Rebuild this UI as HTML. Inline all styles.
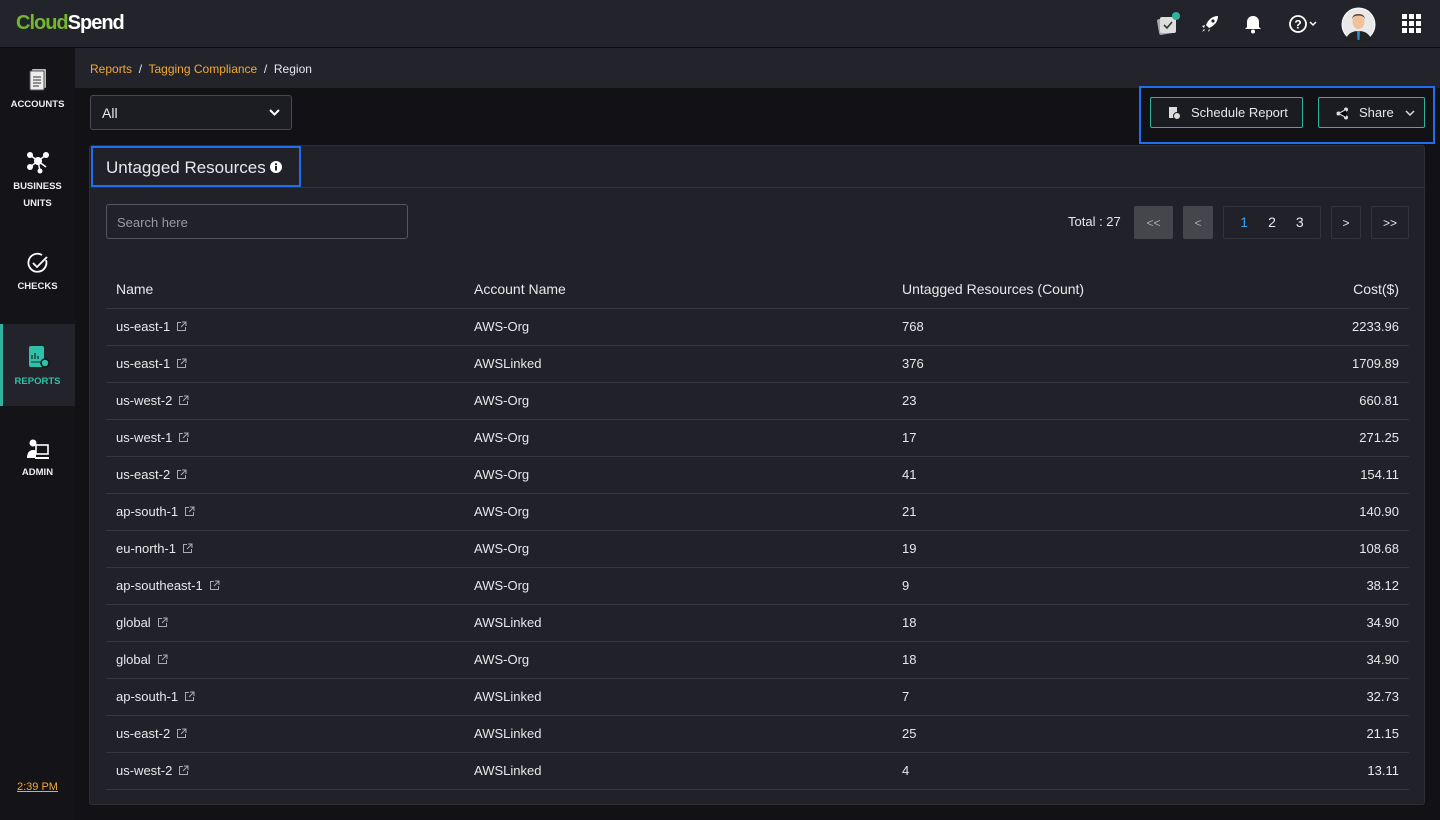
<!DOCTYPE html>
<html><head><meta charset="utf-8"><style>
*{box-sizing:border-box;margin:0;padding:0}
body{width:1440px;height:820px;background:#111116;font-family:"Liberation Sans",sans-serif;color:#e8e8ea;position:relative;overflow:hidden;font-size:13px}
.top{position:absolute;left:0;top:0;width:1440px;height:48px;background:#22232b;border-bottom:1px solid #0b0b0e}
.logo{position:absolute;left:16px;top:12px;font-size:20px;font-weight:bold;letter-spacing:-1px}
.side{position:absolute;left:0;top:48px;width:75px;height:772px;background:#131318}
.nav{position:absolute;left:0;width:75px;text-align:center;font-size:9.5px;font-weight:bold;color:#eee;line-height:17px}
.nav svg{display:block;margin:0 auto 4px}
.bc{position:absolute;left:75px;top:48px;width:1365px;height:40px;background:#22232b;font-size:12px;padding:14px 15px}
.bc a{color:#f0a93a}
.sel{position:absolute;left:90px;top:95px;width:202px;height:35px;border:1px solid #4a4b52;border-radius:3px;background:#1c1d23;padding:9px 11px;font-size:14px}
.btnbox{position:absolute;left:1139px;top:86px;width:296px;height:58px;border:2px solid #1f6ef0}
.btn{position:absolute;top:97px;height:31px;border:1px solid #2fb39d;border-radius:2px;background:#1b1c22;font-size:13px;padding:7px 0 0 0;white-space:nowrap}
.panel{position:absolute;left:89px;top:145px;width:1336px;height:660px;background:#212229;border:1px solid #2e2f36;border-radius:3px}
.ttl{position:absolute;left:91px;top:146px;width:210px;height:41px;border:2px solid #1f6ef0;font-size:17px;padding:10px 13px;white-space:nowrap}
.hdrline{position:absolute;left:89px;top:187px;width:1336px;height:1px;background:#33343b}
.search{position:absolute;left:106px;top:204px;width:302px;height:35px;border:1px solid #55565c;border-radius:3px;padding:10px 10px;color:#9a9ba0;font-size:13px}
.pg{position:absolute;top:206px;height:33px;border:1px solid #34353c;border-radius:2px;text-align:center;font-size:12px;padding-top:9px}
table{position:absolute;left:106px;top:270px;width:1303px;border-collapse:collapse}
td,th{height:37px;border-bottom:1px solid #36373e;padding:0 10px;text-align:left;font-weight:normal;font-size:13px}
th{font-size:14px;height:38px}
td:last-child,th:last-child{text-align:right}
.ext{display:inline-block;vertical-align:-1px;margin-left:6px}
</style></head><body>
<div class="top">
<div class="logo"><span style="color:#74b72e">Cloud</span><span style="color:#fff">Spend</span></div>
<svg style="position:absolute;left:1156px;top:12px" width="26" height="24"><rect x="2" y="6" width="16" height="16" rx="2" fill="#aaa" transform="rotate(-10 10 14)"/><rect x="4" y="5" width="16" height="16" rx="2" fill="#ddd"/><path d="M8 13l3 3 5-6" stroke="#333" stroke-width="1.6" fill="none"/><circle cx="20" cy="4" r="4" fill="#2fb39d"/></svg>
<svg style="position:absolute;left:1200px;top:14px" width="20" height="20"><path d="M18 2c-6 0-10 4-12 9l3 3c5-2 9-6 9-12z M5 11l-3 1 2 2z M9 15l-1 3 2-2z M4 15l-2 3 3-2z" fill="#fff"/><circle cx="13" cy="7" r="1.6" fill="#22232b"/></svg>
<svg style="position:absolute;left:1244px;top:14px" width="18" height="20"><path d="M9 2c-4 0-6 3-6 6v5l-2 2h16l-2-2V8c0-3-2-6-6-6z" fill="#fff"/><circle cx="9" cy="17.5" r="2" fill="#fff"/></svg>
<svg style="position:absolute;left:1288px;top:14px" width="32" height="20"><circle cx="10" cy="10" r="8" stroke="#fff" stroke-width="1.8" fill="none"/><text x="10" y="14.5" font-size="12" font-weight="bold" fill="#fff" text-anchor="middle" font-family="Liberation Sans">?</text><path d="M22 8l3 3 3-3" stroke="#fff" stroke-width="1.5" fill="none"/></svg>
<svg style="position:absolute;left:1341px;top:7px" width="35" height="35"><circle cx="17.5" cy="17.5" r="17" fill="#fff"/><circle cx="17.5" cy="17.5" r="16" fill="#e9e9e9"/><path d="M5 32c2-6 7-8 12.5-8s10.5 2 12.5 8a16 16 0 0 1-25 0z" fill="#222"/><path d="M16 24h3l-0.5 9h-2z" fill="#1e90d6"/><ellipse cx="17.5" cy="15" rx="6" ry="7" fill="#f0c29c"/><path d="M11 13c0-6 13-6 13 0c0-4-2-6-6.5-6S11 9 11 13z" fill="#6b3d1f"/></svg>
<svg style="position:absolute;left:1402px;top:14px" width="20" height="20" fill="#fff"><rect x="0" y="0" width="5" height="5"/><rect x="7" y="0" width="5" height="5"/><rect x="14" y="0" width="5" height="5"/><rect x="0" y="7" width="5" height="5"/><rect x="7" y="7" width="5" height="5"/><rect x="14" y="7" width="5" height="5"/><rect x="0" y="14" width="5" height="5"/><rect x="7" y="14" width="5" height="5"/><rect x="14" y="14" width="5" height="5"/></svg>
</div>
<div class="side">
<div class="nav" style="top:20px"><svg width="20" height="24"><rect x="4" y="1" width="14" height="19" rx="1" fill="#bbb"/><rect x="2" y="3" width="14" height="19" rx="1" fill="#eee" stroke="#555"/><path d="M5 9h8M5 12h8M5 15h8M5 18h6" stroke="#333"/></svg>ACCOUNTS</div>
<div class="nav" style="top:102px"><svg width="26" height="24" fill="#fff"><circle cx="5" cy="5" r="3"/><circle cx="21" cy="5" r="3"/><circle cx="13" cy="11" r="4"/><circle cx="5" cy="17" r="3"/><circle cx="15" cy="21" r="2.5"/><path d="M5 5L21 17M21 5L5 17M13 11L15 21" stroke="#fff" stroke-width="1.5"/></svg>BUSINESS<br>UNITS</div>
<div class="nav" style="top:204px"><svg width="22" height="22"><path d="M19 8A9 9 0 1 1 15 3" stroke="#fff" stroke-width="1.8" fill="none"/><path d="M6 11l4 4 10-10" stroke="#fff" stroke-width="1.8" fill="none"/></svg>CHECKS</div>
<div style="position:absolute;left:0;top:276px;width:75px;height:82px;background:#22232b;border-left:3px solid #2fb39d"></div>
<div class="nav" style="top:297px;color:#2fc1a7"><svg width="24" height="24"><rect x="3" y="1" width="15" height="21" rx="2" fill="#2fc1a7"/><path d="M6 14v-4M9 14V8M12 14v-3" stroke="#133" stroke-width="1.3"/><path d="M5 17h10" stroke="#133"/><circle cx="19" cy="18" r="4" fill="#2fc1a7" stroke="#131318" stroke-width="1.5"/></svg>REPORTS</div>
<div class="nav" style="top:390px"><svg width="24" height="22" fill="#fff"><circle cx="7" cy="5" r="3.5"/><path d="M1 20c0-6 3-8 6-8s3 1 3 1v7z"/><rect x="10" y="7" width="12" height="9" stroke="#fff" stroke-width="1.6" fill="none"/><path d="M9 20h14" stroke="#fff" stroke-width="2"/></svg>ADMIN</div>
<div style="position:absolute;left:17px;top:733px;font-size:11px;color:#f0a93a;text-decoration:underline">2:39 PM</div>
</div>
<div class="bc"><a>Reports</a> &nbsp;/&nbsp; <a>Tagging Compliance</a> &nbsp;/&nbsp; <span>Region</span></div>
<div class="sel">All<svg style="position:absolute;right:11px;top:13px" width="11" height="8"><path d="M1 1l4.5 4.5L10 1" stroke="#fff" stroke-width="2" fill="none"/></svg></div>
<div class="btnbox"></div>
<div class="btn" style="left:1150px;width:153px;padding-left:40px">Schedule Report<svg style="position:absolute;left:17px;top:9px" width="13" height="13"><rect x="1" y="0" width="8" height="11" fill="#ddd"/><circle cx="9" cy="9" r="3.5" fill="#ddd" stroke="#1b1c22"/></svg></div>
<div class="btn" style="left:1318px;width:107px;padding-left:40px">Share<svg style="position:absolute;left:17px;top:9px" width="13" height="13"><circle cx="10" cy="2.5" r="2" fill="#ddd"/><circle cx="2.5" cy="6.5" r="2" fill="#ddd"/><circle cx="10" cy="10.5" r="2" fill="#ddd"/><path d="M10 2.5L2.5 6.5 10 10.5" stroke="#ddd"/></svg><svg style="position:absolute;left:86px;top:12px" width="10" height="7"><path d="M1 1l4 4 4-4" stroke="#ddd" stroke-width="1.5" fill="none"/></svg></div>
<div class="panel"></div>
<div class="hdrline"></div>
<div class="ttl">Untagged Resources <svg style="vertical-align:0px" width="12" height="12"><circle cx="6" cy="6" r="6" fill="#fff"/><rect x="5" y="5" width="2" height="4.5" fill="#212229"/><circle cx="6" cy="3.2" r="1.1" fill="#212229"/></svg></div>
<div class="search">Search here</div>
<div style="position:absolute;left:1068px;top:214px;font-size:13px">Total : 27</div>
<div class="pg" style="left:1134px;width:39px;background:#45464c;color:#aaa;border-color:#45464c">&lt;&lt;</div>
<div class="pg" style="left:1183px;width:30px;background:#45464c;color:#aaa;border-color:#45464c">&lt;</div>
<div class="pg" style="left:1223px;width:98px;font-size:14px;padding-top:7px"><span style="color:#3aa0e8;margin-right:20px">1</span><span style="margin-right:20px">2</span><span>3</span></div>
<div class="pg" style="left:1331px;width:30px">&gt;</div>
<div class="pg" style="left:1371px;width:38px">&gt;&gt;</div>
<table>
<tr><th style="width:358px">Name</th><th style="width:428px">Account Name</th><th>Untagged Resources (Count)</th><th>Cost($)</th></tr>
<tr><td>us-east-1<svg class="ext" width="11" height="11"><path d="M5 1.5H1.5v8h8V6M6 1h4v4M10 1L5 6" stroke="#aaa" fill="none"/></svg></td><td>AWS-Org</td><td>768</td><td>2233.96</td></tr>
<tr><td>us-east-1<svg class="ext" width="11" height="11"><path d="M5 1.5H1.5v8h8V6M6 1h4v4M10 1L5 6" stroke="#aaa" fill="none"/></svg></td><td>AWSLinked</td><td>376</td><td>1709.89</td></tr>
<tr><td>us-west-2<svg class="ext" width="11" height="11"><path d="M5 1.5H1.5v8h8V6M6 1h4v4M10 1L5 6" stroke="#aaa" fill="none"/></svg></td><td>AWS-Org</td><td>23</td><td>660.81</td></tr>
<tr><td>us-west-1<svg class="ext" width="11" height="11"><path d="M5 1.5H1.5v8h8V6M6 1h4v4M10 1L5 6" stroke="#aaa" fill="none"/></svg></td><td>AWS-Org</td><td>17</td><td>271.25</td></tr>
<tr><td>us-east-2<svg class="ext" width="11" height="11"><path d="M5 1.5H1.5v8h8V6M6 1h4v4M10 1L5 6" stroke="#aaa" fill="none"/></svg></td><td>AWS-Org</td><td>41</td><td>154.11</td></tr>
<tr><td>ap-south-1<svg class="ext" width="11" height="11"><path d="M5 1.5H1.5v8h8V6M6 1h4v4M10 1L5 6" stroke="#aaa" fill="none"/></svg></td><td>AWS-Org</td><td>21</td><td>140.90</td></tr>
<tr><td>eu-north-1<svg class="ext" width="11" height="11"><path d="M5 1.5H1.5v8h8V6M6 1h4v4M10 1L5 6" stroke="#aaa" fill="none"/></svg></td><td>AWS-Org</td><td>19</td><td>108.68</td></tr>
<tr><td>ap-southeast-1<svg class="ext" width="11" height="11"><path d="M5 1.5H1.5v8h8V6M6 1h4v4M10 1L5 6" stroke="#aaa" fill="none"/></svg></td><td>AWS-Org</td><td>9</td><td>38.12</td></tr>
<tr><td>global<svg class="ext" width="11" height="11"><path d="M5 1.5H1.5v8h8V6M6 1h4v4M10 1L5 6" stroke="#aaa" fill="none"/></svg></td><td>AWSLinked</td><td>18</td><td>34.90</td></tr>
<tr><td>global<svg class="ext" width="11" height="11"><path d="M5 1.5H1.5v8h8V6M6 1h4v4M10 1L5 6" stroke="#aaa" fill="none"/></svg></td><td>AWS-Org</td><td>18</td><td>34.90</td></tr>
<tr><td>ap-south-1<svg class="ext" width="11" height="11"><path d="M5 1.5H1.5v8h8V6M6 1h4v4M10 1L5 6" stroke="#aaa" fill="none"/></svg></td><td>AWSLinked</td><td>7</td><td>32.73</td></tr>
<tr><td>us-east-2<svg class="ext" width="11" height="11"><path d="M5 1.5H1.5v8h8V6M6 1h4v4M10 1L5 6" stroke="#aaa" fill="none"/></svg></td><td>AWSLinked</td><td>25</td><td>21.15</td></tr>
<tr><td>us-west-2<svg class="ext" width="11" height="11"><path d="M5 1.5H1.5v8h8V6M6 1h4v4M10 1L5 6" stroke="#aaa" fill="none"/></svg></td><td>AWSLinked</td><td>4</td><td>13.11</td></tr>
</table>
</body></html>
